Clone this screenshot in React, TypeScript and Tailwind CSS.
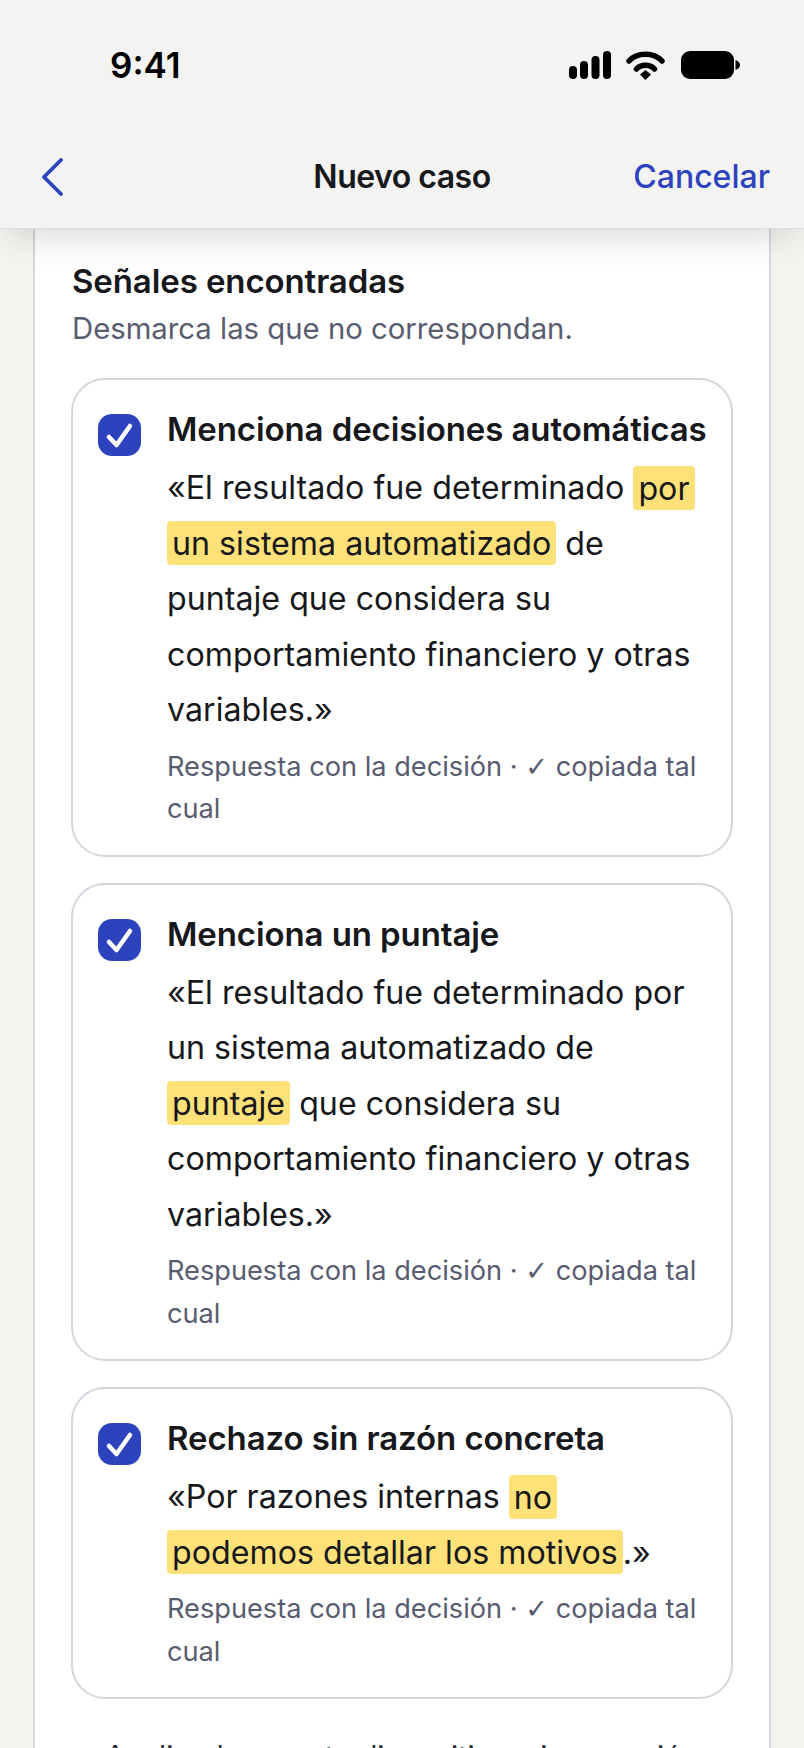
const FONT = 'font-["Inter","Noto_Sans",sans-serif]';

function StatusIcons() {
  return (
    <div className="flex items-center gap-[15px]">
      <svg width="42" height="28" viewBox="0 0 42 28" fill="#000">
        <rect x="0" y="15" width="8" height="13" rx="4" />
        <rect x="11" y="10" width="8" height="18" rx="4" />
        <rect x="22.500" y="5" width="8" height="23" rx="4" />
        <rect x="34" y="0" width="8" height="28" rx="4" />
      </svg>
      <svg width="39" height="29" viewBox="0 0 39 29" fill="none" stroke="#000" strokeWidth="5.500" strokeLinecap="round" className="mr-[1px]">
        <path d="M3 10 C11 1 28 1 36 10" />
        <path d="M10.500 18 C15 13 24 13 28.500 18" />
        <path d="M14 23.500 L19.500 19 L25 23.500 L19.500 29 Z" fill="#000" stroke="none" />
      </svg>
      <svg width="59" height="28" viewBox="0 0 59 28" fill="#000">
        <rect x="0" y="0" width="53" height="28" rx="9" />
        <path d="M54.500 9 C57.500 10 59 12 59 14 C59 16 57.500 18 54.500 19 Z" />
      </svg>
    </div>
  );
}

function Header() {
  return (
    <div className="shrink-0 relative z-10 h-[229px] bg-[#f3f3f1] border-b border-[#dcdddf] shadow-[0_16px_34px_-10px_rgba(0,0,0,0.16)]">
      <div className="flex items-center justify-between pt-[44px] pl-[110px] pr-[64px]">
        <span className="text-[35px] leading-[42px] font-semibold text-black">9:41</span>
        <StatusIcons />
      </div>
      <div className="grid grid-cols-[1fr_auto_1fr] items-center mt-[69px] px-[34px]">
        <svg width="22" height="38" viewBox="0 0 22 38" fill="none" stroke="#2d43bd" strokeWidth="3.800" strokeLinecap="round" strokeLinejoin="round" className="ml-[7px]">
          <path d="M20 2 L3 19 L20 36" />
        </svg>
        <span className="text-[32px] leading-[44px] font-semibold text-[#17181c] tracking-[-0.5px]">Nuevo caso</span>
        <span className="text-[32px] leading-[44px] font-medium text-[#2d43bd] text-right">Cancelar</span>
      </div>
    </div>
  );
}

function Hl({ children }: { children: string }) {
  return <mark className="bg-[#ffe17a] text-inherit rounded-[4px] px-[5px] py-[2.500px] [box-decoration-break:clone]">{children}</mark>;
}

function Signal({ title, children }: { title: string; children: React.ReactNode }) {
  return (
    <div className="flex gap-[26px] border-2 border-[#d4d6de] rounded-[34px] bg-white pl-[25px] pr-[29px] pt-[27px] pb-[24px]">
      <div className="shrink-0 w-[43px] h-[42px] mt-[7px] rounded-[14px] bg-[#2d43bd] flex items-center justify-center">
        <svg width="43" height="42" viewBox="0 0 43 42" fill="none" stroke="#fff" strokeWidth="4.500" strokeLinecap="round" strokeLinejoin="round">
          <path d="M11 23 L18.500 31 L32 12" />
        </svg>
      </div>
      <div className="min-w-0 flex-1">
        <div className="text-[33px] leading-[44px] font-semibold text-[#17181c] tracking-[-0.1px] whitespace-nowrap">{title}</div>
        <p className="mt-[9px] text-[32.200px] leading-[55.500px] text-[#17181c]">{children}</p>
        <p className="mt-[8px] text-[27.200px] leading-[42.500px] text-[#585c70]">
          Respuesta con la decisión · <span className='font-["DejaVu_Sans"]'>✓</span> copiada tal cual
        </p>
      </div>
    </div>
  );
}

export default function App() {
  return (
    <div className={`${FONT} w-[804px] h-[1748px] overflow-hidden flex flex-col bg-[#f4f5f1]`}>
      <Header />
      <div className="mx-[33px] flex-1 bg-white border-x-2 border-[#d4d6de] px-[37px] pt-[30px]">
        <h2 className="text-[33px] leading-[44px] font-semibold text-[#17181c] tracking-[-0.1px]">Señales encontradas</h2>
        <p className="mt-[4px] text-[29.300px] leading-[44px] text-[#585c70]">Desmarca las que no correspondan.</p>
        <div className="mt-[27px] -mx-[1px] flex flex-col gap-[26px]">
          <Signal title="Menciona decisiones automáticas">
            «El resultado fue determinado <Hl>por un sistema automatizado</Hl> de puntaje que considera su comportamiento financiero y otras variables.»
          </Signal>
          <Signal title="Menciona un puntaje">
            «El resultado fue determinado por un sistema automatizado de <Hl>puntaje</Hl> que considera su comportamiento financiero y otras variables.»
          </Signal>
          <Signal title="Rechazo sin razón concreta">
            «Por razones internas <Hl>no podemos detallar los motivos</Hl>.»
          </Signal>
        </div>
        <p className="mt-[38px] text-center text-[29.300px] leading-[40px] text-[#2f313a]">Analizado en este dispositivo, sin conexión</p>
      </div>
    </div>
  );
}
